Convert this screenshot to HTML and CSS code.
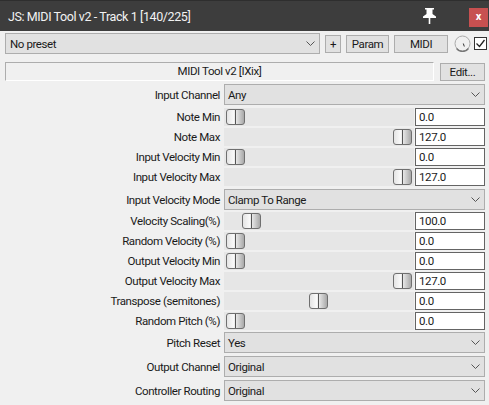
FILE: index.html
```html
<!DOCTYPE html>
<html lang="en">
<head>
<meta charset="utf-8">
<title>JS: MIDI Tool v2</title>
<link rel="stylesheet" href="styles.css">
</head>
<body>
<div class="window">
  <header class="titlebar">
    <span class="title">JS: MIDI Tool v2 - Track 1 [140/225]</span>
    <svg class="pin" width="13" height="16" viewBox="0 0 13 16"><path d="M2 0h9v1.500H9.500V6L13 8.500V10H7.300v6H5.700v-6H0V8.500L3.500 6V1.500H2z" fill="#fff"/></svg>
    <span class="close">x</span>
  </header>
  <div class="toolbar">
    <div class="combo preset"><span>No preset</span><svg class="chev" width="9" height="5" viewBox="0 0 9 5"><path d="M.5.5l4 4 4-4" fill="none" stroke="#555"/></svg></div>
    <button class="btn plus">+</button>
    <button class="btn param">Param</button>
    <button class="btn midi">MIDI</button>
    <svg class="knob" width="17" height="17" viewBox="0 0 17 17"><circle cx="8.500" cy="8.500" r="7.500" fill="#f0f0f0" stroke="#aaa"/><path d="M2.500 13.500a7.500 7.500 0 0 0 12 0" fill="none" stroke="#777" stroke-width="1.300"/><path d="M9.300 8.500l1 3" stroke="#333" fill="none"/></svg>
    <svg class="check" width="13" height="13" viewBox="0 0 13 13"><rect x=".5" y=".5" width="12" height="12" fill="#fff" stroke="#333"/><path d="M2.500 6.500l3 3 5-6.500" fill="none" stroke="#222" stroke-width="1.300"/></svg>
  </div>
  <div class="namebar">
    <div class="name">MIDI Tool v2 [IXix]</div>
    <button class="btn edit">Edit...</button>
  </div>
  <div class="params">
    <div class="row combo-row first"><label>Input Channel</label><div class="combo"><span>Any</span><svg class="chev" width="9" height="5" viewBox="0 0 9 5"><path d="M.5.5l4 4 4-4" fill="none" stroke="#555"/></svg></div></div>
    <div class="row"><label>Note Min</label><div class="track"><i class="thumb" style="left:2px"></i></div><input value="0.0"></div>
    <div class="row"><label>Note Max</label><div class="track"><i class="thumb" style="left:169px"></i></div><input value="127.0"></div>
    <div class="row"><label>Input Velocity Min</label><div class="track"><i class="thumb" style="left:2px"></i></div><input value="0.0"></div>
    <div class="row"><label>Input Velocity Max</label><div class="track"><i class="thumb" style="left:169px"></i></div><input value="127.0"></div>
    <div class="row combo-row"><label>Input Velocity Mode</label><div class="combo"><span>Clamp To Range</span><svg class="chev" width="9" height="5" viewBox="0 0 9 5"><path d="M.5.5l4 4 4-4" fill="none" stroke="#555"/></svg></div></div>
    <div class="row"><label>Velocity Scaling(%)</label><div class="track"><i class="thumb" style="left:18px"></i></div><input value="100.0"></div>
    <div class="row"><label>Random Velocity (%)</label><div class="track"><i class="thumb" style="left:2px"></i></div><input value="0.0"></div>
    <div class="row"><label>Output Velocity Min</label><div class="track"><i class="thumb" style="left:2px"></i></div><input value="0.0"></div>
    <div class="row"><label>Output Velocity Max</label><div class="track"><i class="thumb" style="left:169px"></i></div><input value="127.0"></div>
    <div class="row"><label>Transpose (semitones)</label><div class="track"><i class="thumb" style="left:85px"></i></div><input value="0.0"></div>
    <div class="row"><label>Random Pitch (%)</label><div class="track"><i class="thumb" style="left:2px"></i></div><input value="0.0"></div>
    <div class="row combo-row tight"><label>Pitch Reset</label><div class="combo"><span>Yes</span><svg class="chev" width="9" height="5" viewBox="0 0 9 5"><path d="M.5.5l4 4 4-4" fill="none" stroke="#555"/></svg></div></div>
    <div class="row combo-row"><label>Output Channel</label><div class="combo"><span>Original</span><svg class="chev" width="9" height="5" viewBox="0 0 9 5"><path d="M.5.5l4 4 4-4" fill="none" stroke="#555"/></svg></div></div>
    <div class="row combo-row"><label>Controller Routing</label><div class="combo"><span>Original</span><svg class="chev" width="9" height="5" viewBox="0 0 9 5"><path d="M.5.5l4 4 4-4" fill="none" stroke="#555"/></svg></div></div>
  </div>
</div>
</body>
</html>
```
FILE: styles.css
```css
* { box-sizing: border-box; }
html, body { margin: 0; padding: 0; }
body { width: 489px; height: 405px; overflow: hidden; background: #f0f0f0; font: 11.5px Roboto, "Liberation Sans", Arial, sans-serif; letter-spacing: -0.4px; color: #1a1a1a; }
.window { display: flex; flex-direction: column; height: 405px; }
.titlebar { height: 31px; background: #3d3d3d; border-top: 1px solid #2e2e2e; display: flex; align-items: center; color: #f2f2f2; padding-left: 8px; }
.title { flex: 1; font-size: 12.5px; letter-spacing: -0.4px; }
.pin { margin: 0 33px 1px 0; }
.close { width: 19px; height: 19px; background: #c75050; color: #fff; font-weight: 700; font-size: 11px; letter-spacing: 0; text-align: center; line-height: 17px; margin-right: 1px; margin-top: 3px; }
.toolbar { display: flex; align-items: center; height: 21px; margin: 2px 0 0 5px; }
.combo { flex: 1; height: 21px; background: #e1e1e1; border: 1px solid #adadad; display: flex; align-items: center; justify-content: space-between; padding: 0 4px 0 3px; }
.preset { flex: 0 0 315px; margin-right: 5px; padding-left: 4px; }
.btn { font: inherit; letter-spacing: inherit; color: #1a1a1a; background: #e1e1e1; border: 1px solid #adadad; padding: 0; height: 18px; }
.plus { width: 16px; margin-right: 5px; }
.param { width: 43px; margin-right: 5px; }
.midi { width: 54px; margin-right: 6px; }
.knob { margin-right: 3px; }
.namebar { display: flex; margin: 8px 0 0 5px; height: 19px; }
.name { width: 429px; height: 19px; text-align: center; border: 1px solid #adadad; border-right-color: #fff; border-bottom-color: #fff; line-height: 17px; background: #f0f0f0; }
.edit { width: 45px; margin-left: 6px; height: 18px; margin-top: 1px; }
.params { display: flex; flex-direction: column; margin-top: 3px; }
.row { display: flex; height: 20px; align-items: center; }
.row label { width: 224px; text-align: right; padding-right: 4px; flex: none; }
.combo-row { height: 21px; margin: 2px 4px 1px 0; }
.first { margin: 0 4px 2px 0; }
.tight { margin-top: 1px; }
.track { position: relative; width: 190px; height: 18px; background: #e6e6e6; flex: none; margin-right: 1px; }
.thumb { position: absolute; top: 1px; width: 19px; height: 16px; border: 1px solid #6f6f6f; border-radius: 3px; background: linear-gradient(90deg, #e4e4e4, #fafafa 40%, #e8e8e8 46%, #555 46%, #555 54%, #e6e6e6 54%, #a8a8a8); }
.row input { width: 70px; height: 18px; border: 1px solid #646464; background: #fff; font: inherit; letter-spacing: inherit; color: #1a1a1a; padding: 0 3px; margin: 0; outline: none; border-radius: 0; }
```
